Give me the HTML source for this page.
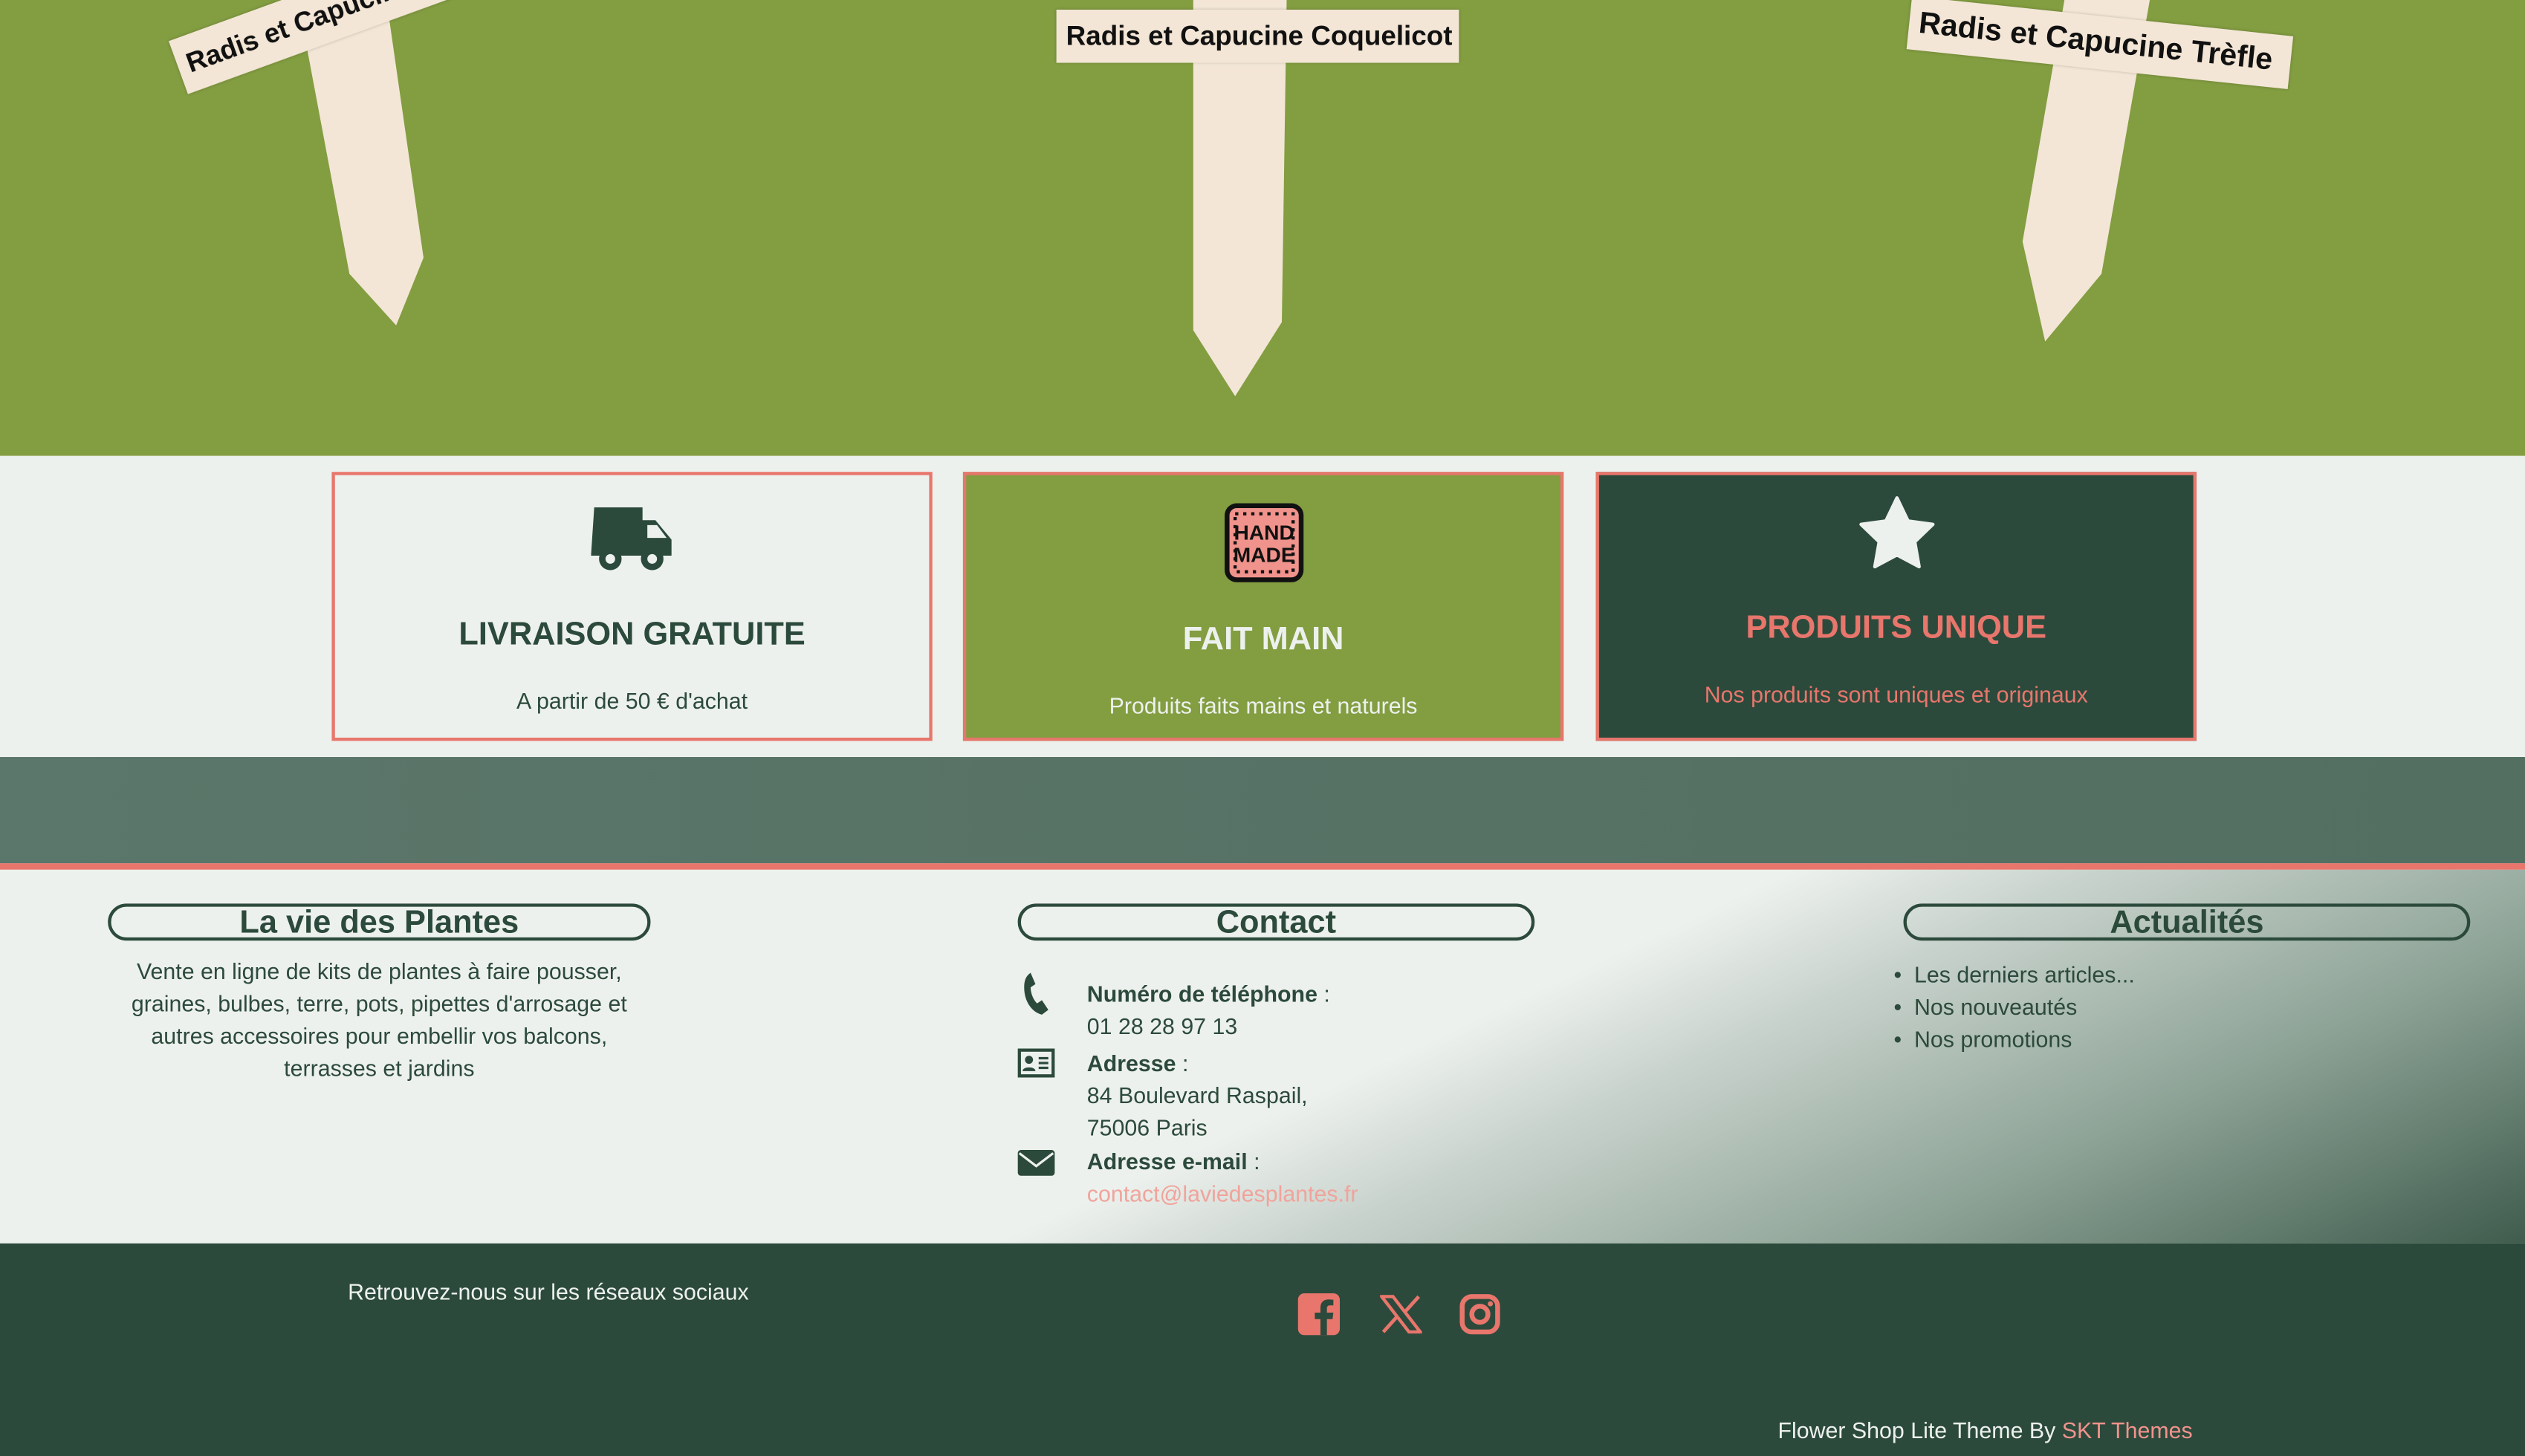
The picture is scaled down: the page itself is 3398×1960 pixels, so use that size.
<!DOCTYPE html>
<html><head><meta charset="utf-8"><style>
*{margin:0;padding:0;box-sizing:border-box}
html,body{width:3398px;height:1960px;overflow:hidden;background:#edf1ed}
#w{width:1568px;height:904px;transform:scale(2.16709,2.16814);transform-origin:0 0;position:relative;font-family:"Liberation Sans",sans-serif;color:#2c4a3c}
.abs{position:absolute}
.lbl{position:absolute;background:#f3e6d6;font-weight:bold;color:#111;font-size:17px;padding:4px 6px;white-space:nowrap;box-shadow:0 0 2px rgba(0,0,0,.2)}
.box{position:absolute;top:293px;width:373px;height:167px;border:2px solid #e8766c;text-align:center}
.box h3{position:absolute;width:100%;font-size:20px;font-weight:bold}
.box p{position:absolute;width:100%;font-size:14px}
.pill{position:absolute;height:23px;border:2px solid #2c4a3c;border-radius:12px;text-align:center;font-weight:bold;font-size:20px;line-height:20px}
.t{position:absolute;font-size:14px;line-height:20px}
</style></head><body><div id="w">
<div class="abs" style="left:0;top:0;width:1568px;height:283px;background:#839d41"></div>
<svg class="abs" style="left:0;top:0" width="1568" height="283">
<polygon points="741,0 799,0 796,200 767,246 741,205" fill="#f3e6d6"/>
<polygon points="185,0 240,0 263,160 246,202 217,170" fill="#f3e6d6"/>
<polygon points="1282,0 1335,0 1305,170 1270,212 1256,150" fill="#f3e6d6"/>
</svg>
<div class="lbl" style="left:656px;top:6px;width:250px;height:33px;text-align:center;line-height:25px">Radis et Capucine Coquelicot</div>
<div class="lbl" style="left:105px;top:-8px;width:190px;height:35px;transform:rotate(-20deg);line-height:27px">Radis et Capucine</div>
<div class="lbl" style="left:1185px;top:10px;width:238px;height:33px;transform:rotate(6deg);line-height:25px;font-size:19px">Radis et Capucine Trèfle</div>

<div class="box" style="left:206px;background:#edf1ed">
<svg class="abs" style="left:159px;top:18px" width="52" height="42" viewBox="0 0 52 42"><path d="M2 2h30v8h8l10 12v10h-50z" fill="#2c4a3c"/><path d="M35 13h6l6 8h-12z" fill="#edf1ed"/><circle cx="12" cy="34" r="7" fill="#2c4a3c"/><circle cx="12" cy="34" r="3" fill="#edf1ed"/><circle cx="38" cy="34" r="7" fill="#2c4a3c"/><circle cx="38" cy="34" r="3" fill="#edf1ed"/></svg>
<h3 style="top:88px">LIVRAISON GRATUITE</h3><p style="top:132px">A partir de 50 € d'achat</p></div>
<div class="box" style="left:598px;background:#839d41;color:#edf1ed">
<svg class="abs" style="left:160px;top:17px" width="50" height="50" viewBox="0 0 50 50"><rect x="2" y="2" width="46" height="46" rx="6" fill="#f0938c" stroke="#111" stroke-width="3"/><rect x="7" y="7" width="36" height="36" fill="none" stroke="#111" stroke-width="2" stroke-dasharray="2 3"/><text x="25" y="23" font-size="13" font-weight="bold" text-anchor="middle" fill="#111" font-family="Liberation Sans">HAND</text><text x="25" y="37" font-size="13" font-weight="bold" text-anchor="middle" fill="#111" font-family="Liberation Sans">MADE</text></svg>
<h3 style="top:91px">FAIT MAIN</h3><p style="top:135px">Produits faits mains et naturels</p></div>
<div class="box" style="left:991px;background:#2c4a3c;color:#e8766c">
<svg class="abs" style="left:160px;top:12px" width="50" height="48" viewBox="0 0 24 23"><path d="M12 1l3.3 6.9 7.4 1-5.4 5.2 1.3 7.4L12 18l-6.6 3.5 1.3-7.4L1.3 8.9l7.4-1z" fill="#edf1ed" stroke="#edf1ed" stroke-linejoin="round"/></svg>
<h3 style="top:84px">PRODUITS UNIQUE</h3><p style="top:128px">Nos produits sont uniques et originaux</p></div>

<div class="abs" style="left:0;top:470px;width:1568px;height:66px;background:linear-gradient(90deg,#5b766a,#526f61)"></div>
<div class="abs" style="left:0;top:536px;width:1568px;height:4px;background:#e8766c"></div>
<div class="abs" style="left:0;top:540px;width:1568px;height:232px;background:linear-gradient(155deg,#edf1ed 0%,#edf1ed 54%,#c9d3cd 63%,#8ea497 80%,#3f5c4d 100%)"></div>

<div class="pill" style="left:67px;top:561px;width:337px">La vie des Plantes</div>
<div class="t" style="left:67px;top:593px;width:337px;text-align:center">Vente en ligne de kits de plantes à faire pousser, graines, bulbes, terre, pots, pipettes d'arrosage et autres accessoires pour embellir vos balcons, terrasses et jardins</div>

<div class="pill" style="left:632px;top:561px;width:321px">Contact</div>
<svg class="abs" style="left:634px;top:603px" width="18" height="28" viewBox="0 0 18 28"><path d="M6 1l3 7-3 2c0 4 2 8 4 10l3-2 4 6-4 3C6 25 2 18 2 10 2 6 3 3 6 1z" fill="#2c4a3c"/></svg>
<div class="t" style="left:675px;top:607px"><b>Numéro de téléphone</b> :<br>01 28 28 97 13</div>
<svg class="abs" style="left:632px;top:651px" width="23" height="18" viewBox="0 0 23 18"><rect x="1" y="1" width="21" height="16" fill="none" stroke="#2c4a3c" stroke-width="2"/><circle cx="7" cy="7" r="2.5" fill="#2c4a3c"/><path d="M3 14c0-3 8-3 8 0z" fill="#2c4a3c"/><path d="M13 6h6M13 9h6M13 12h6" stroke="#2c4a3c" stroke-width="1.5"/></svg>
<div class="t" style="left:675px;top:650px"><b>Adresse</b> :<br>84 Boulevard Raspail,<br>75006 Paris</div>
<svg class="abs" style="left:632px;top:713px" width="23" height="18" viewBox="0 0 23 18"><rect x="0" y="1" width="23" height="16" rx="2" fill="#2c4a3c"/><path d="M1 3l10.5 8L22 3" fill="none" stroke="#edf1ed" stroke-width="1.5"/></svg>
<div class="t" style="left:675px;top:711px"><b>Adresse e-mail</b> :<br><span style="color:#f0a49c">contact@laviedesplantes.fr</span></div>

<div class="pill" style="left:1182px;top:561px;width:352px">Actualités</div>
<div class="t" style="left:1176px;top:595px">•&nbsp; Les derniers articles...<br>•&nbsp; Nos nouveautés<br>•&nbsp; Nos promotions</div>

<div class="abs" style="left:0;top:772px;width:1568px;height:132px;background:#2c4a3c"></div>
<div class="t" style="left:216px;top:792px;color:#edf1ed">Retrouvez-nous sur les réseaux sociaux</div>
<svg class="abs" style="left:806px;top:803px" width="26" height="26" viewBox="0 0 26 26"><rect width="26" height="26" rx="4" fill="#e8766c"/><path d="M18 26V16h3.5l.5-4h-4V9.5c0-1.2.4-2 2-2h2V4c-.4 0-1.7-.2-3-.2-3 0-5 1.8-5 5V12h-3.5v4H14v10z" fill="#2c4a3c"/></svg>
<svg class="abs" style="left:857px;top:804px" width="26" height="24" viewBox="0 0 26 24"><path d="M1 1h7l17 22h-7z" fill="none" stroke="#e8766c" stroke-width="2"/><path d="M24 1L15 11M2 23l9-10" stroke="#e8766c" stroke-width="2.2"/></svg>
<svg class="abs" style="left:906px;top:803px" width="26" height="26" viewBox="0 0 26 26"><rect x="2" y="2" width="22" height="22" rx="6" fill="none" stroke="#e8766c" stroke-width="3"/><circle cx="13" cy="13" r="5" fill="none" stroke="#e8766c" stroke-width="3"/><circle cx="19.5" cy="6.5" r="1.6" fill="#e8766c"/></svg>
<div class="t" style="left:1104px;top:878px;color:#edf1ed">Flower Shop Lite Theme By <span style="color:#f0938c">SKT Themes</span></div>
</div></body></html>
